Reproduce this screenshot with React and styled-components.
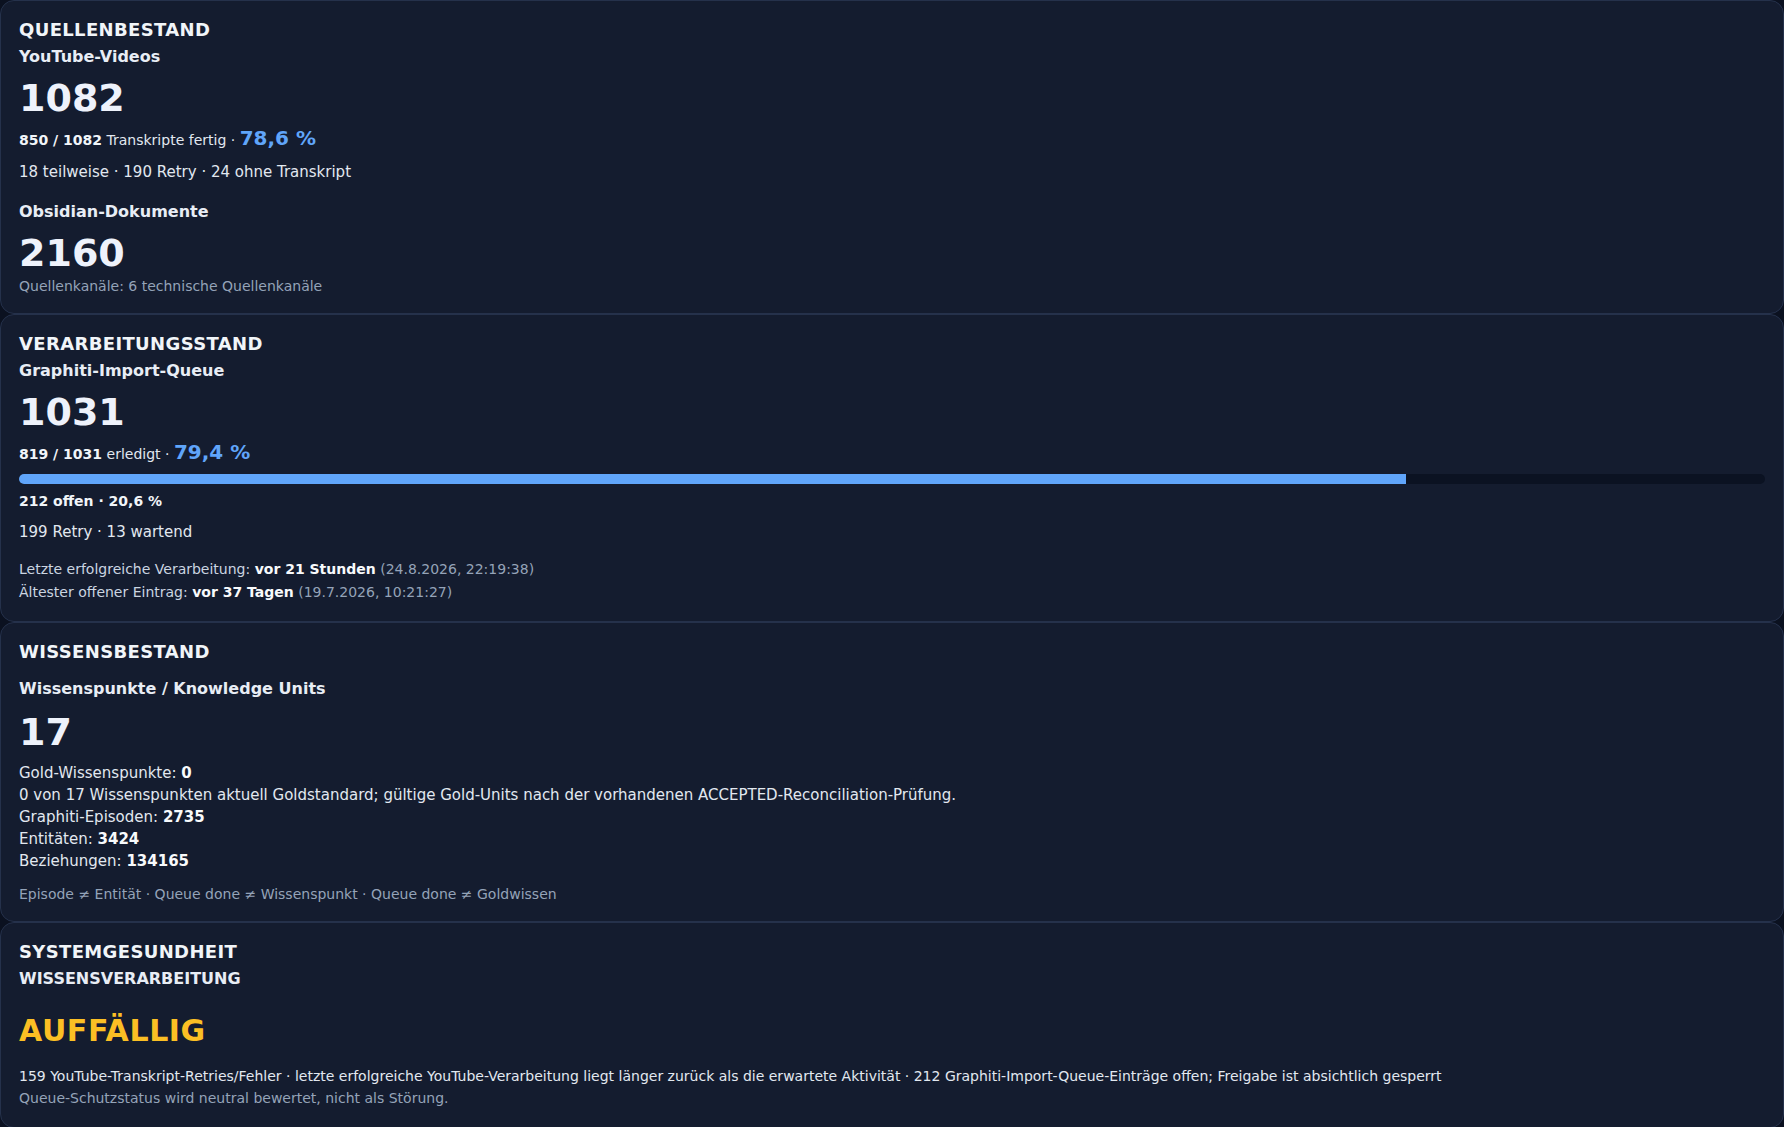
import React from 'react';
import styled, { createGlobalStyle } from 'styled-components';

const GlobalStyle = createGlobalStyle`
    html, body {
        margin: 0;
        padding: 0;
        background: #0b1120;
        font-family: "DejaVu Sans", Verdana, sans-serif;
        color: #e2e8f0;
    }
`;

const queue = { done: 819, total: 1031 };

const App = () => {
    const donePct = (queue.done / queue.total) * 100;

    return (
        <Page>
            <GlobalStyle />

            <Card>
                <CardTitle>QUELLENBESTAND</CardTitle>
                <Metric>
                    <MetricLabel>YouTube-Videos</MetricLabel>
                    <BigNumber>1082</BigNumber>
                    <Ratio><b>850 / 1082</b> Transkripte fertig · <Percent>78,6 %</Percent></Ratio>
                    <Detail>18 teilweise · 190 Retry · 24 ohne Transkript</Detail>
                </Metric>
                <Metric $spaced>
                    <MetricLabel>Obsidian-Dokumente</MetricLabel>
                    <BigNumber>2160</BigNumber>
                    <Note>Quellenkanäle: 6 technische Quellenkanäle</Note>
                </Metric>
            </Card>

            <Card>
                <CardTitle>VERARBEITUNGSSTAND</CardTitle>
                <Metric>
                    <MetricLabel>Graphiti-Import-Queue</MetricLabel>
                    <BigNumber>1031</BigNumber>
                    <Ratio><b>819 / 1031</b> erledigt · <Percent>79,4 %</Percent></Ratio>
                    <ProgressTrack>
                        <ProgressFill style={{ width: `${donePct}%` }} />
                    </ProgressTrack>
                    <OpenCount>212 offen · 20,6 %</OpenCount>
                    <Detail $top={10}>199 Retry · 13 wartend</Detail>
                    <Timeline>
                        <div>Letzte erfolgreiche Verarbeitung: <b>vor 21 Stunden</b> <Stamp>(24.8.2026, 22:19:38)</Stamp></div>
                        <div>Ältester offener Eintrag: <b>vor 37 Tagen</b> <Stamp>(19.7.2026, 10:21:27)</Stamp></div>
                    </Timeline>
                </Metric>
            </Card>

            <Card>
                <CardTitle>WISSENSBESTAND</CardTitle>
                <Metric $top={17}>
                    <MetricLabel>Wissenspunkte / Knowledge Units</MetricLabel>
                    <BigNumber $top={11}>17</BigNumber>
                    <FactList>
                        <div>Gold-Wissenspunkte: <b>0</b></div>
                        <div>0 von 17 Wissenspunkten aktuell Goldstandard; gültige Gold-Units nach der vorhandenen ACCEPTED-Reconciliation-Prüfung.</div>
                        <div>Graphiti-Episoden: <b>2735</b></div>
                        <div>Entitäten: <b>3424</b></div>
                        <div>Beziehungen: <b>134165</b></div>
                    </FactList>
                    <Note $top={13}>Episode ≠ Entität · Queue done ≠ Wissenspunkt · Queue done ≠ Goldwissen</Note>
                </Metric>
            </Card>

            <Card>
                <CardTitle>SYSTEMGESUNDHEIT</CardTitle>
                <Metric>
                    <MetricLabel>WISSENSVERARBEITUNG</MetricLabel>
                    <Status $tone="warn">AUFFÄLLIG</Status>
                    <StatusText>
                        <div>159 YouTube-Transkript-Retries/Fehler · letzte erfolgreiche YouTube-Verarbeitung liegt länger zurück als die erwartete Aktivität · 212 Graphiti-Import-Queue-Einträge offen; Freigabe ist absichtlich gesperrt</div>
                        <Muted>Queue-Schutzstatus wird neutral bewertet, nicht als Störung.</Muted>
                    </StatusText>
                </Metric>
            </Card>
        </Page>
    );
};


const Page = styled.main`
    display: flex;
    flex-direction: column;
`;

const Card = styled.section`
    background: #141c2f;
    border: 1px solid #25314b;
    border-radius: 14px;
    padding: 18px;
`;

const CardTitle = styled.h2`
    margin: 0;
    font-size: 18px;
    line-height: 21px;
    font-weight: 700;
    letter-spacing: 0.02em;
    color: #f1f5f9;
`;

const Metric = styled.div`
    margin-top: ${({ $spaced, $top }) => ($spaced ? 19 : $top ?? 7)}px;
`;

const MetricLabel = styled.h3`
    margin: 0;
    font-size: 16px;
    line-height: 19px;
    font-weight: 700;
    color: #e8edf5;
`;

const BigNumber = styled.div`
    margin-top: ${({ $top }) => $top ?? 9}px;
    font-size: 38px;
    line-height: 46px;
    font-weight: 700;
    color: #eef2fb;
`;

const Ratio = styled.div`
    margin-top: 5px;
    font-size: 14px;
    line-height: 24px;
    color: #e2e8f0;

    b {
        color: #f1f5f9;
    }
`;

const Percent = styled.span`
    font-size: 20px;
    font-weight: 700;
    color: #60a5fa;
`;

const Detail = styled.div`
    margin-top: ${({ $top }) => $top ?? 9}px;
    font-size: 15px;
    line-height: 22px;
    color: #e2e8f0;
`;

const Note = styled.div`
    margin-top: ${({ $top }) => $top ?? 1}px;
    font-size: 14px;
    line-height: 18px;
    color: #94a3b8;
`;

const ProgressTrack = styled.div`
    margin-top: 8px;
    height: 10px;
    border-radius: 999px;
    background: #0b1222;
    overflow: hidden;
`;

const ProgressFill = styled.div`
    height: 100%;
    background: #60a5fa;
`;

const OpenCount = styled.div`
    margin-top: 7px;
    font-size: 14px;
    line-height: 20px;
    font-weight: 700;
    color: #f1f5f9;
`;

const Timeline = styled.div`
    margin-top: 15px;
    font-size: 14px;
    line-height: 22.5px;
    color: #cbd5e1;

    b {
        color: #f8fafc;
    }
`;

const Stamp = styled.span`
    color: #94a3b8;
`;

const FactList = styled.div`
    margin-top: 7px;
    font-size: 15px;
    line-height: 22px;
    color: #e2e8f0;

    b {
        color: #f8fafc;
    }
`;

const Status = styled.div`
    margin-top: 25px;
    font-size: 30px;
    line-height: 36px;
    font-weight: 700;
    letter-spacing: 0.02em;
    color: ${({ $tone }) => ($tone === 'warn' ? '#fbbf24' : '#4ade80')};
`;

const StatusText = styled.div`
    margin-top: 16px;
    font-size: 14px;
    line-height: 22px;
    color: #e2e8f0;
`;

const Muted = styled.div`
    color: #94a3b8;
`;


export default App;
